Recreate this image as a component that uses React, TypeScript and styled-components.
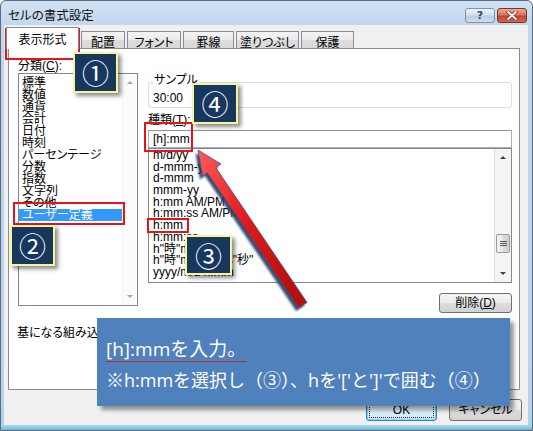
import React from "react";
import styled, { createGlobalStyle, css } from "styled-components";

const UI = `"Liberation Sans", "Noto Sans CJK JP", sans-serif`;
const CALLOUT_FONT = `"Open Sans", "Noto Sans CJK JP", sans-serif`;

const GlobalStyle = createGlobalStyle`
  html, body { margin: 0; padding: 0; background: #ffffff; }
  #root { width: 533px; height: 431px; }
  *, *::before, *::after { box-sizing: border-box; }
`;

const Stage = styled.div`
  position: relative;
  width: 533px;
  height: 431px;
  overflow: hidden;
`;

const Window = styled.div`
  width: 533px;
  height: 431px;
  display: flex;
  flex-direction: column;
  border: 1px solid #5a6a80;
  border-radius: 6px 6px 0 0;
  padding: 0 4px 5px 3px;
  background: linear-gradient(
    180deg,
    #d2e2f4 0px,
    #c2d6ed 24px,
    #bcd2ea 400px,
    #a6d4ea 425px,
    #5db3da 430px
  );
  font-family: ${UI};
  font-size: 12px;
  font-feature-settings: "palt";
  color: #000;
`;

const TitleBar = styled.div`
  height: 24px;
  flex: none;
  display: flex;
  justify-content: space-between;
  padding-left: 4px;
`;

const Title = styled.span`
  font-size: 12.5px;
  line-height: 14px;
  margin-top: 8px;
  color: #111;
`;

const CaptionButtons = styled.div`
  display: flex;
  gap: 2px;
  margin-top: 7px;
  margin-right: 1px;
`;

const CaptionButton = styled.div<{ $variant: "help" | "close" }>`
  width: 30px;
  height: 15px;
  border-radius: 3px;
  display: flex;
  align-items: center;
  justify-content: center;
  font-family: "DejaVu Sans", sans-serif;
  font-weight: bold;
  font-size: 11px;
  line-height: 1;
  ${(p) =>
    p.$variant === "close"
      ? css`
          background: linear-gradient(180deg, #eaa796 0%, #d8735e 45%, #c4442c 55%, #d06a50 100%);
          border: 1px solid #7b3528;
          color: #fff;
        `
      : css`
          background: linear-gradient(180deg, #edf3fa 0%, #d3dfee 45%, #bccee4 55%, #cddcee 100%);
          border: 1px solid #8193aa;
          color: #34465e;
        `}
`;

const Client = styled.div`
  flex: 1;
  display: flex;
  flex-direction: column;
  background: #f0f0f0;
  padding: 2px 6px 0 4px;
`;

const TabRow = styled.div`
  display: flex;
  align-items: flex-end;
  height: 22px;
  margin-left: -2px;
  margin-bottom: -1px;
  position: relative;
  z-index: 1;
`;

const Tab = styled.div<{ $w: number; $active?: boolean }>`
  width: ${(p) => p.$w}px;
  flex: none;
  display: flex;
  align-items: center;
  justify-content: center;
  border: 1px solid #898c95;
  border-bottom: none;
  ${(p) =>
    p.$active
      ? css`
          height: 22px;
          background: #fff;
          padding-top: 0;
        `
      : css`
          height: 17px;
          margin-bottom: 1px;
          margin-left: 2px;
          padding-top: 3px;
          background: linear-gradient(180deg, #f3f3f3 0%, #ebebeb 50%, #dddddd 51%, #d8d8d8 100%);
        `}
`;

const Panel = styled.div`
  height: 342px;
  flex: none;
  margin-right: 2px;
  border: 1px solid #898c95;
  background: #fff;
  display: flex;
  flex-direction: column;
  padding: 11px 7px 0 9px;
`;

const TopRow = styled.div`
  display: flex;
  gap: 10px;
`;

const LeftCol = styled.div`
  width: 120px;
  flex: none;
  display: flex;
  flex-direction: column;
`;

const RightCol = styled.div`
  flex: 1;
  display: flex;
  flex-direction: column;
`;

const FieldLabel = styled.div<{ $gap?: number }>`
  line-height: 12px;
  height: 13px;
  margin-top: ${(p) => p.$gap ?? 0}px;
  white-space: nowrap;
`;

const Accel = styled.span`
  text-decoration: underline;
`;

const ListBox = styled.div<{ $h: number }>`
  height: ${(p) => p.$h}px;
  border: 1px solid #828790;
  display: flex;
  background: #fff;
  overflow: hidden;
`;

const Items = styled.div<{ $pt: number; $pl: number }>`
  flex: 1;
  padding-top: ${(p) => p.$pt}px;
  overflow: hidden;
  & > div {
    padding-left: ${(p) => p.$pl}px;
  }
`;

const Item = styled.div<{ $lh: number; $selected?: boolean }>`
  height: ${(p) => p.$lh}px;
  line-height: ${(p) => p.$lh}px;
  white-space: nowrap;
  ${(p) =>
    p.$selected &&
    css`
      background: #3399ff;
      color: #fff;
    `}
`;

const ScrollBar = styled.div<{ $w: number; $disabled?: boolean }>`
  width: ${(p) => p.$w}px;
  flex: none;
  display: flex;
  flex-direction: column;
  background: ${(p) => (p.$disabled ? "#fbfbfb" : "#f4f4f4")};
  border-left: 1px solid ${(p) => (p.$disabled ? "#f2f2f2" : "#dedede")};
`;

const ScrollArrow = styled.div`
  height: 17px;
  flex: none;
  display: flex;
  align-items: center;
  justify-content: center;
`;

const Triangle = styled.span<{ $dir: "up" | "down"; $dim?: boolean }>`
  width: 0;
  height: 0;
  border-left: 3px solid transparent;
  border-right: 3px solid transparent;
  ${(p) =>
    p.$dir === "up"
      ? css`
          border-bottom: 3px solid ${p.$dim ? "#a8a8a8" : "#404040"};
        `
      : css`
          border-top: 3px solid ${p.$dim ? "#a8a8a8" : "#404040"};
        `}
`;

const Track = styled.div`
  flex: 1;
  display: flex;
  flex-direction: column;
`;

const Thumb = styled.div<{ $top: number; $h: number }>`
  margin: ${(p) => p.$top}px 1px 0 1px;
  height: ${(p) => p.$h}px;
  border: 1px solid #9a9a9a;
  border-radius: 2px;
  background: linear-gradient(90deg, #f4f4f4 0%, #e8e8e8 50%, #dadada 51%, #d0d0d0 100%);
  display: flex;
  align-items: center;
  justify-content: center;
`;

const Grip = styled.span`
  width: 7px;
  height: 1px;
  background: #5a5a5a;
  box-shadow: 0 -2px 0 #5a5a5a, 0 2px 0 #5a5a5a;
`;

const SampleBox = styled.div`
  margin-top: 22px;
  height: 26px;
  border: 1px solid #d5dfe5;
  border-radius: 3px;
  padding: 0 4px;
  display: flex;
  flex-direction: column;
  align-items: flex-start;
`;

const Legend = styled.span`
  margin-top: -9px;
  line-height: 12px;
  height: 12px;
  padding: 0 1px;
  background: #fff;
`;

const SampleValue = styled.span`
  margin-top: 6px;
  line-height: 12px;
`;

const FormatInput = styled.div`
  margin-top: 3px;
  height: 18px;
  border: 1px solid #abadb3;
  border-top-color: #8e9196;
  padding-left: 4px;
  line-height: 16px;
  background: #fff;
`;

const ButtonRow = styled.div<{ $mt: number; $gap?: number }>`
  display: flex;
  justify-content: flex-end;
  gap: ${(p) => p.$gap ?? 0}px;
  margin-top: ${(p) => p.$mt}px;
`;

const PushButton = styled.div<{ $w: number; $h: number; $focused?: boolean }>`
  width: ${(p) => p.$w}px;
  height: ${(p) => p.$h}px;
  border-radius: 3px;
  display: flex;
  align-items: center;
  justify-content: center;
  padding: 2px;
  ${(p) =>
    p.$focused
      ? css`
          border: 1px solid #3c7fb1;
          box-shadow: inset 0 0 0 1px #7fd3f7;
          background: linear-gradient(180deg, #f6fbfe 0%, #eaf5fc 50%, #dceffb 51%, #d2eafa 100%);
        `
      : css`
          border: 1px solid #707070;
          background: linear-gradient(180deg, #f4f4f4 0%, #ececec 50%, #dddddd 51%, #d2d2d2 100%);
        `}
`;

const ButtonLabel = styled.span<{ $focused?: boolean }>`
  flex: 1;
  align-self: stretch;
  display: flex;
  align-items: center;
  justify-content: center;
  line-height: 12px;
  border: 1px dotted ${(p) => (p.$focused ? "#222" : "transparent")};
`;

const Hint = styled.div`
  margin-top: 14px;
  margin-left: -1px;
  line-height: 12px;
  white-space: nowrap;
`;

/* ---------- annotation overlays ---------- */

const RedFrame = styled.div<{ $x: number; $y: number; $w: number; $h: number }>`
  position: absolute;
  left: ${(p) => p.$x}px;
  top: ${(p) => p.$y}px;
  width: ${(p) => p.$w}px;
  height: ${(p) => p.$h}px;
  border: 2px solid #e3141c;
  pointer-events: none;
`;

const Badge = styled.div<{ $x: number; $y: number; $w: number; $h: number }>`
  position: absolute;
  left: ${(p) => p.$x}px;
  top: ${(p) => p.$y}px;
  width: ${(p) => p.$w}px;
  height: ${(p) => p.$h}px;
  background: #17375e;
  border: 2px solid #f6f59a;
  box-shadow: 3px 3px 4px rgba(0, 0, 0, 0.45);
  display: flex;
  align-items: center;
  justify-content: center;
  color: #fff;
  font-family: "Noto Sans CJK JP", sans-serif;
  font-size: 27px;
  line-height: 1;
`;

const ArrowLayer = styled.svg`
  position: absolute;
  left: 0;
  top: 0;
  width: 533px;
  height: 431px;
  pointer-events: none;
`;

const Callout = styled.div`
  position: absolute;
  left: 97px;
  top: 318px;
  width: 413px;
  height: 88px;
  background: #4f81bd;
  box-shadow: 4px 4px 4px rgba(0, 0, 0, 0.4);
  padding: 18px 0 0 9px;
  display: flex;
  flex-direction: column;
  gap: 5px;
  color: #fff;
  font-family: ${CALLOUT_FONT};
`;

const CalloutLine = styled.div<{ $size: number; $underline?: boolean }>`
  font-size: ${(p) => p.$size}px;
  line-height: 26px;
  height: 26px;
  white-space: nowrap;
  ${(p) =>
    p.$underline &&
    css`
      & > span {
        text-decoration: underline;
        text-decoration-color: #c0282d;
        text-decoration-thickness: 1px;
        text-underline-offset: 5px;
      }
    `}
`;

const categories = [
  "標準",
  "数値",
  "通貨",
  "会計",
  "日付",
  "時刻",
  "パーセンテージ",
  "分数",
  "指数",
  "文字列",
  "その他",
  "ユーザー定義",
];

const formats = [
  "m/d/yy",
  "d-mmm-yy",
  "d-mmm",
  "mmm-yy",
  "h:mm AM/PM",
  "h:mm:ss AM/PM",
  "h:mm",
  "h:mm:ss",
  'h"時"mm"分"',
  'h"時"mm"分"ss"秒"',
  "yyyy/m/d h:mm",
];

const tabs: { label: string; w: number }[] = [
  { label: "配置", w: 44 },
  { label: "フォント", w: 54 },
  { label: "罫線", w: 51 },
  { label: "塗りつぶし", w: 63 },
  { label: "保護", w: 53 },
];

const ARROW =
  "198,150 221,164 215.8,167.6 307,302.4 298.7,307.9 207.3,172.8 202.5,176.5";

export default function App() {
  return (
    <>
      <GlobalStyle />
      <Stage>
        <Window>
          <TitleBar>
            <Title>セルの書式設定</Title>
            <CaptionButtons>
              <CaptionButton $variant="help">?</CaptionButton>
              <CaptionButton $variant="close">
                <svg width="12" height="9" viewBox="0 0 12 9">
                  <path d="M2 1 L10 8 M10 1 L2 8" stroke="#6b2a1e" strokeWidth="3.2" strokeLinecap="round" />
                  <path d="M2 1 L10 8 M10 1 L2 8" stroke="#ffffff" strokeWidth="1.8" strokeLinecap="round" />
                </svg>
              </CaptionButton>
            </CaptionButtons>
          </TitleBar>
          <Client>
            <TabRow>
              <Tab $w={73} $active>
                表示形式
              </Tab>
              {tabs.map((t) => (
                <Tab key={t.label} $w={t.w}>
                  {t.label}
                </Tab>
              ))}
            </TabRow>
            <Panel>
              <TopRow>
                <LeftCol>
                  <FieldLabel>
                    分類(<Accel>C</Accel>):
                  </FieldLabel>
                  <ListBox $h={233}>
                    <Items $pt={3} $pl={3}>
                      {categories.map((c) => (
                        <Item key={c} $lh={12} $selected={c === "ユーザー定義"}>
                          {c}
                        </Item>
                      ))}
                    </Items>
                    <ScrollBar $w={15} $disabled>
                      <ScrollArrow>
                        <Triangle $dir="up" $dim />
                      </ScrollArrow>
                      <Track />
                      <ScrollArrow>
                        <Triangle $dir="down" $dim />
                      </ScrollArrow>
                    </ScrollBar>
                  </ListBox>
                </LeftCol>
                <RightCol>
                  <SampleBox>
                    <Legend>サンプル</Legend>
                    <SampleValue>30:00</SampleValue>
                  </SampleBox>
                  <FieldLabel $gap={6}>
                    種類(<Accel>T</Accel>):
                  </FieldLabel>
                  <FormatInput>[h]:mm</FormatInput>
                  <ListBox $h={135}>
                    <Items $pt={1} $pl={4}>
                      {formats.map((f) => (
                        <Item key={f} $lh={11.7}>
                          {f}
                        </Item>
                      ))}
                    </Items>
                    <ScrollBar $w={17}>
                      <ScrollArrow>
                        <Triangle $dir="up" />
                      </ScrollArrow>
                      <Track>
                        <Thumb $top={68} $h={19}>
                          <Grip />
                        </Thumb>
                      </Track>
                      <ScrollArrow>
                        <Triangle $dir="down" />
                      </ScrollArrow>
                    </ScrollBar>
                  </ListBox>
                  <ButtonRow $mt={10}>
                    <PushButton $w={73} $h={20}>
                      <ButtonLabel>
                        削除(<Accel>D</Accel>)
                      </ButtonLabel>
                    </PushButton>
                  </ButtonRow>
                </RightCol>
              </TopRow>
              <Hint>基になる組み込みの表示形式を選択し、新しい表示形式を入力してください。</Hint>
            </Panel>
            <ButtonRow $mt={9} $gap={12}>
              <PushButton $w={71} $h={22} $focused>
                <ButtonLabel $focused>OK</ButtonLabel>
              </PushButton>
              <PushButton $w={73} $h={22}>
                <ButtonLabel>キャンセル</ButtonLabel>
              </PushButton>
            </ButtonRow>
          </Client>
        </Window>

        <RedFrame $x={5} $y={28} $w={75} $h={32} />
        <RedFrame $x={13} $y={202} $w={112} $h={23} />
        <RedFrame $x={144} $y={122} $w={49} $h={30} />
        <RedFrame $x={147} $y={218} $w={42} $h={15} />

        <ArrowLayer viewBox="0 0 533 431">
          <defs>
            <filter id="arrowShadow" x="-20%" y="-20%" width="140%" height="140%">
              <feGaussianBlur stdDeviation="1" />
            </filter>
            <linearGradient id="arrowRed" x1="0" y1="0" x2="1" y2="0.6">
              <stop offset="0" stopColor="#ff5a5a" />
              <stop offset="0.5" stopColor="#e41b1b" />
              <stop offset="1" stopColor="#b80f0f" />
            </linearGradient>
          </defs>
          <g transform="translate(-2.5 3)" filter="url(#arrowShadow)">
            <polygon points={ARROW} fill="#1f3a66" opacity="0.9" />
          </g>
          <polygon points={ARROW} fill="url(#arrowRed)" stroke="#3b5586" strokeWidth="0.8" />
        </ArrowLayer>

        <Badge $x={73} $y={52} $w={45} $h={41}>①</Badge>
        <Badge $x={10} $y={225} $w={45} $h={41}>②</Badge>
        <Badge $x={185} $y={235} $w={47} $h={40}>③</Badge>
        <Badge $x={192} $y={83} $w={46} $h={41}>④</Badge>

        <Callout>
          <CalloutLine $size={19} $underline>
            <span>[h]:mmを入力。</span>
          </CalloutLine>
          <CalloutLine $size={18}>※h:mmを選択し（③）、hを'['と']'で囲む（④）</CalloutLine>
        </Callout>
      </Stage>
    </>
  );
}
